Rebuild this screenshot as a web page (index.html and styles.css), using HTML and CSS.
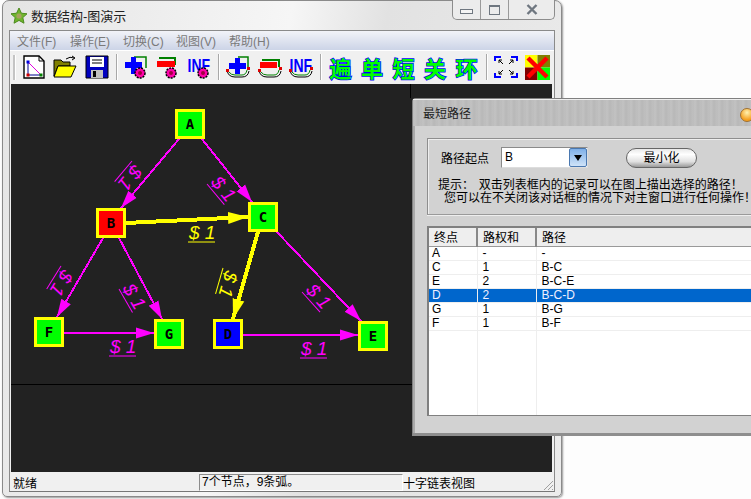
FILE: index.html
```html
<!DOCTYPE html>
<html lang="zh-CN">
<head>
    <meta charset="UTF-8">
    <meta name="viewport" content="width=device-width, initial-scale=1.0">
    <title>数据结构-图演示</title>
    <link rel="stylesheet" href="styles.css">
</head>
<body>
    <div class="window">
        <div class="titlebar">
            <svg class="app-icon" width="18" height="18" viewBox="0 0 18 18">
                <path d="M9 1l2.400 5.200 5.600.6-4.200 3.800 1.200 5.600L9 13.400l-5 2.800 1.200-5.600L1 6.800l5.600-.6z" fill="#6fb52c" stroke="#4d8a1e"/>
                <circle cx="9" cy="9" r="2.600" fill="#a8a060"/>
            </svg>
            <span class="app-title">数据结构-图演示</span>
            <div class="win-buttons">
                <div class="win-btn btn-min"><i></i></div>
                <div class="win-btn btn-max"><i></i></div>
                <div class="win-btn btn-close">
                    <svg width="12" height="11" viewBox="0 0 12 11"><path d="M1.500 1l9 9M10.500 1l-9 9" stroke="#6f7780" stroke-width="2.400" fill="none"/></svg>
                </div>
            </div>
        </div>

        <div class="client">
            <div class="menubar">
                <span>文件(F)</span>
                <span>操作(E)</span>
                <span>切换(C)</span>
                <span>视图(V)</span>
                <span>帮助(H)</span>
            </div>

            <div class="toolbar">
                <div class="grip"></div>
                <div class="tool">
                    <svg width="24" height="24" viewBox="0 0 24 24">
                        <path d="M2 1h15l5 5v17H2z" fill="#fff" stroke="#000" stroke-width="1.400"/>
                        <path d="M17 1v5h5" fill="none" stroke="#000"/>
                        <path d="M6 7v13h13" fill="none" stroke="#000090"/>
                        <path d="M6 7l13 13" stroke="#e000e0"/>
                        <rect x="4.500" y="5.500" width="3" height="3" fill="#0000e0"/>
                        <rect x="4.500" y="18.500" width="3" height="3" fill="#d00000"/>
                        <rect x="17.500" y="18.500" width="3" height="3" fill="#008000"/>
                    </svg>
                </div>
                <div class="tool">
                    <svg width="24" height="24" viewBox="0 0 24 24">
                        <path d="M1 5h7l2 2h7v4H5L1 21z" fill="#808000" stroke="#000"/>
                        <path d="M5 11h18l-5 11H1z" fill="#ffff00" stroke="#000"/>
                        <path d="M13 4q4-3 8-1M19 1l3 2-3 2" fill="none" stroke="#000"/>
                    </svg>
                </div>
                <div class="tool">
                    <svg width="24" height="24" viewBox="0 0 24 24">
                        <path d="M1 1h22v22H1z" fill="#0000c0" stroke="#000"/>
                        <rect x="5" y="2" width="14" height="10" fill="#fff"/>
                        <path d="M7 5h10M7 8h10" stroke="#000"/>
                        <rect x="6" y="15" width="12" height="8" fill="#c0c0c0"/>
                        <rect x="8" y="16" width="3" height="6" fill="#000"/>
                    </svg>
                </div>
                <div class="tool-sep"></div>
                <div class="tool">
                    <svg width="24" height="24" viewBox="0 0 24 24">
                        <path d="M10 2h12v11" fill="none" stroke="#008000" stroke-width="1.500"/>
                        <path d="M1 7h6V2h5v5h6v6h-6v6H7v-6H1z" fill="#0000ff"/>
                        <circle class="target-ring" cx="16" cy="18" r="5"/>
                        <circle class="target-core" cx="16" cy="18" r="2"/>
                    </svg>
                </div>
                <div class="tool">
                    <svg width="24" height="24" viewBox="0 0 24 24">
                        <path d="M3 3h16v7" fill="none" stroke="#008000" stroke-width="2"/>
                        <rect x="1" y="6" width="18" height="6" fill="#ff0000"/>
                        <circle class="target-ring" cx="15" cy="18" r="5"/>
                        <circle class="target-core" cx="15" cy="18" r="2"/>
                    </svg>
                </div>
                <div class="tool">
                    <svg width="24" height="24" viewBox="0 0 24 24">
                        <text class="inf-text" x="0.500" y="13" transform="scale(1 1.300)">INF</text>
                        <circle class="target-ring" cx="16" cy="18" r="5"/>
                        <circle class="target-core" cx="16" cy="18" r="2"/>
                    </svg>
                </div>
                <div class="tool-sep"></div>
                <div class="tool">
                    <svg width="24" height="24" viewBox="0 0 24 24">
                        <path d="M12 2h10v11" fill="none" stroke="#008000" stroke-width="1.500"/>
                        <path d="M3 8h6V3h5v5h6v6h-6v5H9v-5H3z" fill="#0000ff"/>
                        <path d="M1 15q1 7 8 7h7q6 0 7-6" fill="none" stroke="#000"/>
                        <path d="M3 17q2 3 6 3h7q4 0 5-5" fill="none" stroke="#008000"/>
                        <rect x="0" y="14" width="3" height="3" fill="#e00000"/>
                        <rect x="21" y="12" width="3" height="3" fill="#e00000"/>
                    </svg>
                </div>
                <div class="tool">
                    <svg width="24" height="24" viewBox="0 0 24 24">
                        <path d="M4 5h17v7" fill="none" stroke="#008000" stroke-width="2"/>
                        <rect x="2" y="7" width="17" height="6" fill="#ff0000"/>
                        <path d="M1 15q1 7 8 7h7q6 0 7-6" fill="none" stroke="#000"/>
                        <path d="M3 17q2 3 6 3h7q4 0 5-5" fill="none" stroke="#008000"/>
                        <rect x="0" y="14" width="3" height="3" fill="#e00000"/>
                        <rect x="21" y="12" width="3" height="3" fill="#e00000"/>
                    </svg>
                </div>
                <div class="tool">
                    <svg width="24" height="24" viewBox="0 0 24 24">
                        <text class="inf-text" x="0.500" y="13" transform="scale(1 1.300)">INF</text>
                        <path d="M1 15q1 7 8 7h7q6 0 7-6" fill="none" stroke="#000"/>
                        <path d="M3 17q2 3 6 3h7q4 0 5-5" fill="none" stroke="#008000"/>
                        <rect x="0" y="14" width="3" height="3" fill="#e00000"/>
                        <rect x="21" y="12" width="3" height="3" fill="#e00000"/>
                    </svg>
                </div>
                <div class="tool-sep"></div>
                <div class="tool tool-hanzi">遍</div>
                <div class="tool tool-hanzi">单</div>
                <div class="tool tool-hanzi">短</div>
                <div class="tool tool-hanzi">关</div>
                <div class="tool tool-hanzi">环</div>
                <div class="tool-sep"></div>
                <div class="tool">
                    <svg width="24" height="24" viewBox="0 0 24 24">
                        <path d="M1 6V2h6M17 2h6v4M23 18v4h-6M7 22H1v-4" fill="none" stroke="#0000ff" stroke-width="2"/>
                        <path d="M5 5l4 4M5 5h3M5 5v3M19 5l-4 4M19 5h-3M19 5v3M5 19l4-4M5 19h3M5 19v-3M19 19l-4-4M19 19h-3M19 19v-3" fill="none" stroke="#000"/>
                    </svg>
                </div>
                <div class="tool">
                    <svg width="25" height="25" viewBox="0 0 25 25">
                        <rect width="12.500" height="12.500" fill="#ffff00"/>
                        <rect x="12.500" width="12.500" height="12.500" fill="#808000"/>
                        <rect y="12.500" width="12.500" height="12.500" fill="#800000"/>
                        <rect x="12.500" y="12.500" width="12.500" height="12.500" fill="#00ff00"/>
                        <path d="M3 3l19 19M22 3L3 22" stroke="#ff0000" stroke-width="4.500"/>
                    </svg>
                </div>
            </div>

            <svg class="canvas" width="541" height="388" viewBox="11 84 541 388">
                <defs>
                    <marker id="tip-pink" markerUnits="userSpaceOnUse" markerWidth="18" markerHeight="14" refX="18" refY="7" orient="auto">
                        <path d="M0 1.500L18 7 0 12.500z" fill="#ff00ff"/>
                    </marker>
                    <marker id="tip-yellow" markerUnits="userSpaceOnUse" markerWidth="20" markerHeight="14" refX="20" refY="7" orient="auto">
                        <path d="M0 1L20 7 0 13z" fill="#ffff00"/>
                    </marker>
                </defs>

                <path class="divider" d="M11 384H412M410 84v14"/>

                <line class="edge" x1="179" y1="139" x2="121" y2="208"/>
                <line class="edge" x1="202" y1="139" x2="252" y2="202"/>
                <line class="edge" x1="103" y1="238" x2="57" y2="317"/>
                <line class="edge" x1="119" y1="238" x2="162" y2="319"/>
                <line class="edge" x1="277" y1="232" x2="361" y2="321"/>
                <line class="edge" x1="64" y1="333" x2="154" y2="333"/>
                <line class="edge" x1="243" y1="335" x2="358" y2="335"/>
                <line class="edge-hot" x1="126" y1="223" x2="248" y2="217"/>
                <line class="edge-hot" x1="258" y1="232" x2="233" y2="319"/>

                <g class="label" transform="translate(132 161) rotate(130)"><line x2="27"/><text x="1" y="-3">$ 1</text></g>
                <g class="label" transform="translate(207 184) rotate(50)"><line x2="27"/><text x="1" y="-3">$ 1</text></g>
                <g class="label" transform="translate(61 266) rotate(122)"><line x2="27"/><text x="1" y="-3">$ 1</text></g>
                <g class="label" transform="translate(119 289) rotate(60)"><line x2="27"/><text x="1" y="-3">$ 1</text></g>
                <g class="label" transform="translate(302 292) rotate(48)"><line x2="27"/><text x="1" y="-3">$ 1</text></g>
                <g class="label" transform="translate(109 356)"><line x2="27"/><text x="1" y="-3">$ 1</text></g>
                <g class="label" transform="translate(300 358)"><line x2="27"/><text x="1" y="-3">$ 1</text></g>
                <g class="label label-hot" transform="translate(223 268) rotate(106)"><line x2="27"/><text x="1" y="-3">$ 1</text></g>
                <g class="label label-hot" transform="translate(188 242)"><line x2="27"/><text x="1" y="-3">$ 1</text></g>

                <g class="node" transform="translate(175 109)"><rect x="1.500" y="1.500" width="27" height="27"/><text x="15" y="20">A</text></g>
                <g class="node node-start" transform="translate(96 208)"><rect x="1.500" y="1.500" width="27" height="27"/><text x="15" y="20">B</text></g>
                <g class="node" transform="translate(248 202)"><rect x="1.500" y="1.500" width="27" height="27"/><text x="15" y="20">C</text></g>
                <g class="node" transform="translate(34 317)"><rect x="1.500" y="1.500" width="27" height="27"/><text x="15" y="20">F</text></g>
                <g class="node" transform="translate(154 319)"><rect x="1.500" y="1.500" width="27" height="27"/><text x="15" y="20">G</text></g>
                <g class="node node-end" transform="translate(213 319)"><rect x="1.500" y="1.500" width="27" height="27"/><text x="15" y="20">D</text></g>
                <g class="node" transform="translate(358 321)"><rect x="1.500" y="1.500" width="27" height="27"/><text x="15" y="20">E</text></g>
            </svg>

            <div class="statusbar">
                <span class="status-ready">就绪</span>
                <span class="status-count">7个节点，9条弧。</span>
                <span class="status-view">十字链表视图</span>
                <svg class="size-grip" width="12" height="12" viewBox="0 0 12 12">
                    <path d="M11 2L2 11M11 6l-5 5M11 10l-1 1" stroke="#a0a0a0" fill="none"/>
                </svg>
            </div>
        </div>
    </div>

    <div class="dialog">
        <div class="dialog-title">
            <span>最短路径</span>
            <i class="orb"></i>
        </div>
        <div class="dialog-body">
            <div class="groupbox">
                <div class="start-row">
                    <span class="start-label">路径起点</span>
                    <div class="combo">
                        <span class="combo-value">B</span>
                        <div class="combo-arrow"></div>
                    </div>
                    <div class="pill-btn">最小化</div>
                </div>
                <p class="hint">提示：&nbsp; 双击列表框内的记录可以在图上描出选择的路径！</p>
                <p class="hint hint-second">您可以在不关闭该对话框的情况下对主窗口进行任何操作！</p>
            </div>

            <div class="listview">
                <table class="path-table">
                    <thead>
                        <tr><th class="col-end">终点</th><th class="col-sum">路权和</th><th>路径</th></tr>
                    </thead>
                    <tbody>
                        <tr><td>A</td><td>-</td><td>-</td></tr>
                        <tr><td>C</td><td>1</td><td>B-C</td></tr>
                        <tr><td>E</td><td>2</td><td>B-C-E</td></tr>
                        <tr class="selected"><td>D</td><td>2</td><td>B-C-D</td></tr>
                        <tr><td>G</td><td>1</td><td>B-G</td></tr>
                        <tr><td>F</td><td>1</td><td>B-F</td></tr>
                        <tr class="filler"><td></td><td></td><td></td></tr>
                    </tbody>
                </table>
            </div>
        </div>
    </div>
</body>
</html>
```

FILE: styles.css
```css
html, body { margin: 0; padding: 0; }
body { position: relative; width: 751px; height: 499px; overflow: hidden; background-color: #fdfdfd; font-family: "Liberation Sans", "Noto Sans CJK SC", sans-serif; font-size: 12px; color: #000; }

/* main window */
.window { position: absolute; left: 2px; top: 0; width: 560px; height: 497px; box-sizing: border-box; border: 1px solid #8a8a8a; border-radius: 7px 7px 5px 5px; background: linear-gradient(100deg, #e4e4e4, #f6f6f6 45%, #e2e2e2 60%, #ececec); box-shadow: 1px 1px 2px #999; display: flex; flex-direction: column; padding: 0 6px 4px 6px; }
.titlebar { height: 29px; flex: none; display: flex; align-items: center; position: relative; }
.app-icon { margin: 0 3px 0 1px; }
.app-title { font-size: 13px; color: #222; }
.win-buttons { position: absolute; right: 0; top: -1px; height: 20px; width: 103px; box-sizing: border-box; display: flex; border: 1px solid #8c8c8c; border-top: 0; border-radius: 0 0 5px 5px; background: #ececec; }
.win-btn { display: flex; align-items: center; justify-content: center; border-right: 1px solid #9a9a9a; width: 27px; }
.btn-close { border-right: 0; flex: 1; }
.btn-min i { width: 11px; height: 3px; margin-top: 4px; border: 1px solid #6f7780; background: #f4f4f4; }
.btn-max i { width: 9px; height: 7px; border: 1px solid #6f7780; border-top-width: 2px; }

.client { flex: 1; display: flex; flex-direction: column; border: 1px solid #8a8a8a; border-bottom-color: #777; background: #f0f0f0; min-height: 0; }
.menubar { height: 19px; flex: none; display: flex; gap: 16px; align-items: center; padding-left: 7px; color: #7a7a7a; background: linear-gradient(#f2f3f8, #ccd4e7); }
.menubar span { width: 37px; white-space: nowrap; }

.toolbar { height: 33px; flex: none; display: flex; align-items: center; padding-left: 3px; border-top: 1px solid #fff; box-sizing: border-box; background: #f0f0f0; }
.grip { width: 2px; height: 25px; margin-right: 2px; background: #c4c4c4; border-right: 1px solid #fff; }
.tool { width: 31.500px; height: 26px; display: flex; align-items: center; justify-content: center; }
.tool-sep { width: 1px; height: 26px; margin: 0 2.500px 0 3.250px; background: #a8a8a8; border-right: 1px solid #fff; }
.tool-hanzi { font-size: 22px; font-weight: 700; color: #00ff00; -webkit-text-stroke: 1.500px #0000ff; paint-order: stroke fill; }
.target-ring { fill: #ff00aa; stroke: #000; stroke-width: 1.500; stroke-dasharray: 2 1; }
.target-core { fill: #a00040; }
.inf-text { font-family: "Liberation Sans", sans-serif; font-size: 14px; font-weight: 700; fill: #0000ff; }

.canvas { flex: none; margin: 1px 0 0 1px; background: #222222; display: block; }
.divider { stroke: #000; fill: none; shape-rendering: crispEdges; }
.edge { stroke: #ff00ff; stroke-width: 2; marker-end: url(#tip-pink); shape-rendering: crispEdges; }
.edge-hot { stroke: #ffff00; stroke-width: 4; marker-end: url(#tip-yellow); shape-rendering: crispEdges; }
.label line { stroke: #ff00ff; stroke-width: 1; }
.label text { font-family: "Liberation Sans", sans-serif; font-style: italic; font-size: 19px; fill: #ff00ff; }
.label-hot line { stroke: #ffff00; }
.label-hot text { fill: #ffff00; }
.node rect { fill: #00ff00; stroke: #ffff00; stroke-width: 3; shape-rendering: crispEdges; }
.node text { font-family: "DejaVu Sans Mono", monospace; font-size: 14px; font-weight: 700; fill: #000; text-anchor: middle; }
.node-start rect { fill: #ff0000; }
.node-end rect { fill: #0000ff; }

.statusbar { flex: 1; display: flex; align-items: center; position: relative; background: #f0f0f0; padding: 2px 0 0 3px; box-sizing: border-box; }
.status-ready { width: 186px; }
.status-count { width: 200px; height: 15px; line-height: 15px; padding-left: 2px; border: 1px solid #8c8c8c; border-right-color: #fff; border-bottom-color: #fff; }
.status-view { margin-left: 0; }
.size-grip { position: absolute; right: 0; bottom: 0; }

/* path dialog */
.dialog { position: absolute; left: 412px; top: 98px; width: 360px; height: 338px; box-sizing: border-box; border: 1px solid #808080; border-right: 0; border-radius: 4px 0 0 0; border-bottom: 3px solid #8e8e8e; background: #d2d2d2; box-shadow: inset 2px 0 0 #aaa; display: flex; flex-direction: column; }
.dialog-title { height: 27px; flex: none; position: relative; display: flex; align-items: center; padding: 0 0 2px 10px; color: #222; background: repeating-linear-gradient(90deg, #bcbcbc 0, #c2c2c2 2px, #b8b8b8 5px, #bfbfbf 8px); border-top: 1px solid #eee; box-sizing: border-box; }
.orb { position: absolute; left: 327px; top: 8px; width: 12px; height: 12px; border-radius: 50%; border: 1px solid #a07030; background: radial-gradient(circle at 50% 30%, #fff2b0, #f5a020 70%); }
.dialog-body { flex: 1; padding: 12px 0 0 14px; display: flex; flex-direction: column; }
.groupbox { height: 77px; box-sizing: border-box; border: 1px solid #8e8e8e; border-right: 0; border-bottom-color: #9a9a9a; box-shadow: inset 1px 1px 0 #eee, 0 1px 0 #eee; padding: 7px 0 0 10px; }
.start-row { display: flex; align-items: center; height: 23px; }
.start-label { width: 63px; padding-left: 3px; box-sizing: border-box; }
.combo { width: 87px; height: 21px; display: flex; align-items: stretch; border: 1px solid #8a8a8a; border-right-color: #ddd; border-bottom-color: #ddd; background: #fff; box-sizing: border-box; }
.combo-value { flex: 1; padding: 2px 0 0 3px; }
.combo-arrow { width: 18px; position: relative; background: linear-gradient(#7fb0e8, #cfe3f8); border: 1px solid #4a78b0; box-sizing: border-box; border-radius: 2px; }
.combo-arrow::after { content: ""; position: absolute; left: 4px; top: 6px; border: 4px solid transparent; border-top: 6px solid #000; border-bottom: 0; }
.pill-btn { width: 71px; height: 20px; margin: 1px 0 0 38px; box-sizing: border-box; border: 1px solid #666; border-radius: 10px; text-align: center; line-height: 18px; background: linear-gradient(#e8e8e8, #fff 30%, #e0e0e0 70%, #9a9a9a); }
.hint { margin: 0; line-height: 13px; height: 13px; white-space: nowrap; word-spacing: -1px; }
.start-row + .hint { margin-top: 10px; }
.hint-second { padding-left: 6px; }

.listview { margin-top: 11px; height: 190px; box-sizing: border-box; border: 1px solid #808080; border-right: 0; border-left-width: 2px; border-top-width: 2px; background: #fff; overflow: hidden; }
.path-table { border-collapse: collapse; width: 340px; height: 100%; table-layout: fixed; }
.path-table th { height: 18px; padding: 0 0 0 5px; font-weight: 400; text-align: left; background: #eeeeee; border-right: 2px solid #888; border-bottom: 1px solid #999; box-sizing: border-box; }
.path-table .col-end { width: 48px; }
.path-table .col-sum { width: 59px; }
.path-table td { height: 14px; padding: 0 0 0 5px; line-height: 13px; border-right: 1px solid #eeeeee; border-bottom: 1px solid #eeeeee; box-sizing: border-box; }
.path-table td:first-child { padding-left: 3px; }
.path-table .selected td { background: #0066cc; color: #f0f0ff; }
.path-table .filler td { height: auto; border-bottom: 0; }
```
